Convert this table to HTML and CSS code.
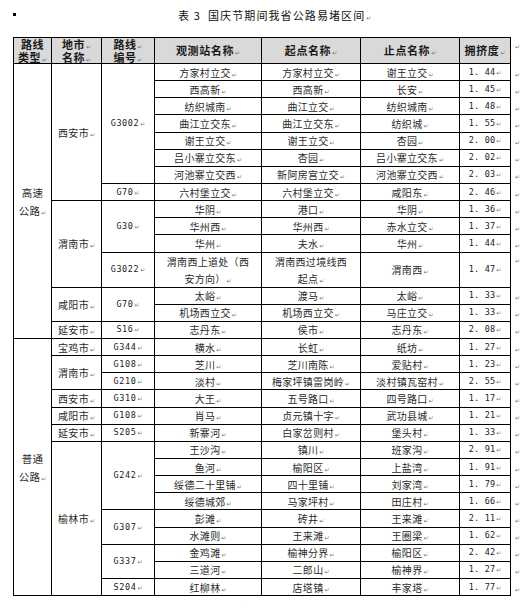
FILE: index.html
```html
<!DOCTYPE html>
<html lang="zh">
<head>
<meta charset="utf-8">
<title>表 3 国庆节期间我省公路易堵区间</title>
<link rel="stylesheet" href="styles.css">
</head>
<body>
<div class="top">
  <span class="bullet"></span>
  <h1 class="title">表 3&nbsp; 国庆节期间我省公路易堵区间<span class="pm"></span></h1>
</div>
<table class="tbl">
  <colgroup>
    <col class="c1"><col class="c2"><col class="c3"><col class="c4"><col class="c5"><col class="c6"><col class="c7"><col class="c8">
  </colgroup>
  <thead>
    <tr class="hd">
      <th><span class="ln">路线</span><span class="ln">类型<span class="pm"></span></span></th>
      <th><span class="ln">地市<span class="pm"></span></span><span class="ln">名称<span class="pm"></span></span></th>
      <th><span class="ln">路线<span class="pm"></span></span><span class="ln">编号<span class="pm"></span></span></th>
      <th>观测站名称<span class="pm"></span></th>
      <th>起点名称<span class="pm"></span></th>
      <th>止点名称<span class="pm"></span></th>
      <th>拥挤度<span class="pm"></span></th>
      <td class="rm top-mark"><span class="pm"></span></td>
    </tr>
  </thead>
  <tbody>
    <tr class="r">
      <td rowspan="15" class="type">高速<br>公路<span class="pm"></span></td>
      <td rowspan="8">西安市<span class="pm"></span></td>
      <td rowspan="7" class="code">G3002<span class="pm"></span></td>
      <td>方家村立交<span class="pm"></span></td><td>方家村立交<span class="pm"></span></td><td>谢王立交<span class="pm"></span></td><td class="num">1. 44<span class="pm"></span></td><td class="rm"><span class="pm"></span></td>
    </tr>
    <tr class="r"><td>西高新<span class="pm"></span></td><td>西高新<span class="pm"></span></td><td>长安<span class="pm"></span></td><td class="num">1. 45<span class="pm"></span></td><td class="rm"><span class="pm"></span></td></tr>
    <tr class="r"><td>纺织城南<span class="pm"></span></td><td>曲江立交<span class="pm"></span></td><td>纺织城南<span class="pm"></span></td><td class="num">1. 48<span class="pm"></span></td><td class="rm"><span class="pm"></span></td></tr>
    <tr class="r"><td>曲江立交东<span class="pm"></span></td><td>曲江立交东<span class="pm"></span></td><td>纺织城<span class="pm"></span></td><td class="num">1. 55<span class="pm"></span></td><td class="rm"><span class="pm"></span></td></tr>
    <tr class="r"><td>谢王立交<span class="pm"></span></td><td>谢王立交<span class="pm"></span></td><td>杏园<span class="pm"></span></td><td class="num">2. 00<span class="pm"></span></td><td class="rm"><span class="pm"></span></td></tr>
    <tr class="r"><td>吕小寨立交东<span class="pm"></span></td><td>杏园<span class="pm"></span></td><td>吕小寨立交东<span class="pm"></span></td><td class="num">2. 02<span class="pm"></span></td><td class="rm"><span class="pm"></span></td></tr>
    <tr class="r"><td>河池寨立交西<span class="pm"></span></td><td>新阿房宫立交<span class="pm"></span></td><td>河池寨立交西<span class="pm"></span></td><td class="num">2. 03<span class="pm"></span></td><td class="rm"><span class="pm"></span></td></tr>
    <tr class="r"><td class="code">G70<span class="pm"></span></td><td>六村堡立交<span class="pm"></span></td><td>六村堡立交<span class="pm"></span></td><td>咸阳东<span class="pm"></span></td><td class="num">2. 46<span class="pm"></span></td><td class="rm"><span class="pm"></span></td></tr>

    <tr class="r">
      <td rowspan="4">渭南市<span class="pm"></span></td>
      <td rowspan="3" class="code">G30<span class="pm"></span></td>
      <td>华阴<span class="pm"></span></td><td>港口<span class="pm"></span></td><td>华阴<span class="pm"></span></td><td class="num">1. 36<span class="pm"></span></td><td class="rm"><span class="pm"></span></td>
    </tr>
    <tr class="r"><td>华州西<span class="pm"></span></td><td>华州西<span class="pm"></span></td><td>赤水立交<span class="pm"></span></td><td class="num">1. 37<span class="pm"></span></td><td class="rm"><span class="pm"></span></td></tr>
    <tr class="r"><td>华州<span class="pm"></span></td><td>夫水<span class="pm"></span></td><td>华州<span class="pm"></span></td><td class="num">1. 44<span class="pm"></span></td><td class="rm"><span class="pm"></span></td></tr>
    <tr class="r2"><td class="code">G3022<span class="pm"></span></td><td class="wrap">渭南西上道处（西<br>安方向）<span class="pm"></span></td><td class="wrap">渭南西过境线西<br>起点<span class="pm"></span></td><td>渭南西<span class="pm"></span></td><td class="num">1. 47<span class="pm"></span></td><td class="rm top-mark"><span class="pm"></span></td></tr>

    <tr class="r">
      <td rowspan="2">咸阳市<span class="pm"></span></td>
      <td rowspan="2" class="code">G70<span class="pm"></span></td>
      <td>太峪<span class="pm"></span></td><td>渡马<span class="pm"></span></td><td>太峪<span class="pm"></span></td><td class="num">1. 33<span class="pm"></span></td><td class="rm"><span class="pm"></span></td>
    </tr>
    <tr class="r"><td>机场西立交<span class="pm"></span></td><td>机场西立交<span class="pm"></span></td><td>马庄立交<span class="pm"></span></td><td class="num">1. 33<span class="pm"></span></td><td class="rm"><span class="pm"></span></td></tr>
    <tr class="r"><td>延安市<span class="pm"></span></td><td class="code">S16<span class="pm"></span></td><td>志丹东<span class="pm"></span></td><td>侯市<span class="pm"></span></td><td>志丹东<span class="pm"></span></td><td class="num">2. 08<span class="pm"></span></td><td class="rm"><span class="pm"></span></td></tr>

    <tr class="r">
      <td rowspan="15" class="type">普通<br>公路<span class="pm"></span></td>
      <td>宝鸡市<span class="pm"></span></td><td class="code">G344<span class="pm"></span></td><td>横水<span class="pm"></span></td><td>长虹<span class="pm"></span></td><td>纸坊<span class="pm"></span></td><td class="num">1. 27<span class="pm"></span></td><td class="rm"><span class="pm"></span></td>
    </tr>
    <tr class="r"><td rowspan="2">渭南市<span class="pm"></span></td><td class="code">G108<span class="pm"></span></td><td>芝川<span class="pm"></span></td><td>芝川南陈<span class="pm"></span></td><td>爱贴村<span class="pm"></span></td><td class="num">1. 23<span class="pm"></span></td><td class="rm"><span class="pm"></span></td></tr>
    <tr class="r"><td class="code">G210<span class="pm"></span></td><td>淡村<span class="pm"></span></td><td>梅家坪镇雷岗岭<span class="pm"></span></td><td>淡村镇瓦窑村<span class="pm"></span></td><td class="num">2. 55<span class="pm"></span></td><td class="rm"><span class="pm"></span></td></tr>
    <tr class="r"><td>西安市<span class="pm"></span></td><td class="code">G310<span class="pm"></span></td><td>大王<span class="pm"></span></td><td>五号路口<span class="pm"></span></td><td>四号路口<span class="pm"></span></td><td class="num">1. 17<span class="pm"></span></td><td class="rm"><span class="pm"></span></td></tr>
    <tr class="r"><td>咸阳市<span class="pm"></span></td><td class="code">G108<span class="pm"></span></td><td>肖马<span class="pm"></span></td><td>贞元镇十字<span class="pm"></span></td><td>武功县城<span class="pm"></span></td><td class="num">1. 21<span class="pm"></span></td><td class="rm"><span class="pm"></span></td></tr>
    <tr class="r"><td>延安市<span class="pm"></span></td><td class="code">S205<span class="pm"></span></td><td>新寨河<span class="pm"></span></td><td>白家岔则村<span class="pm"></span></td><td>堡头村<span class="pm"></span></td><td class="num">1. 33<span class="pm"></span></td><td class="rm"><span class="pm"></span></td></tr>

    <tr class="r">
      <td rowspan="9">榆林市<span class="pm"></span></td>
      <td rowspan="4" class="code">G242<span class="pm"></span></td>
      <td>王沙沟<span class="pm"></span></td><td>镇川<span class="pm"></span></td><td>班家沟<span class="pm"></span></td><td class="num">2. 91<span class="pm"></span></td><td class="rm"><span class="pm"></span></td>
    </tr>
    <tr class="r"><td>鱼河<span class="pm"></span></td><td>榆阳区<span class="pm"></span></td><td>上盐湾<span class="pm"></span></td><td class="num">1. 91<span class="pm"></span></td><td class="rm"><span class="pm"></span></td></tr>
    <tr class="r"><td>绥德二十里铺<span class="pm"></span></td><td>四十里铺<span class="pm"></span></td><td>刘家湾<span class="pm"></span></td><td class="num">1. 79<span class="pm"></span></td><td class="rm"><span class="pm"></span></td></tr>
    <tr class="r"><td>绥德城郊<span class="pm"></span></td><td>马家坪村<span class="pm"></span></td><td>田庄村<span class="pm"></span></td><td class="num">1. 66<span class="pm"></span></td><td class="rm"><span class="pm"></span></td></tr>
    <tr class="r"><td rowspan="2" class="code">G307<span class="pm"></span></td><td>彭滩<span class="pm"></span></td><td>砖井<span class="pm"></span></td><td>王来滩<span class="pm"></span></td><td class="num">2. 11<span class="pm"></span></td><td class="rm"><span class="pm"></span></td></tr>
    <tr class="r"><td>水滩则<span class="pm"></span></td><td>王来滩<span class="pm"></span></td><td>王圈梁<span class="pm"></span></td><td class="num">1. 62<span class="pm"></span></td><td class="rm"><span class="pm"></span></td></tr>
    <tr class="r"><td rowspan="2" class="code">G337<span class="pm"></span></td><td>金鸡滩<span class="pm"></span></td><td>榆神分界<span class="pm"></span></td><td>榆阳区<span class="pm"></span></td><td class="num">2. 42<span class="pm"></span></td><td class="rm"><span class="pm"></span></td></tr>
    <tr class="r"><td>三道河<span class="pm"></span></td><td>二郎山<span class="pm"></span></td><td>榆神界<span class="pm"></span></td><td class="num">1. 27<span class="pm"></span></td><td class="rm"><span class="pm"></span></td></tr>
    <tr class="r"><td class="code">S204<span class="pm"></span></td><td>红柳林<span class="pm"></span></td><td>店塔镇<span class="pm"></span></td><td>丰家塔<span class="pm"></span></td><td class="num">1. 77<span class="pm"></span></td><td class="rm"><span class="pm"></span></td></tr>
  </tbody>
</table>
<h2 class="next">二、高速公路易堵时段</h2>
</body>
</html>
```
FILE: styles.css
```css
html, body {
  margin: 0;
  padding: 0;
  background: #ffffff;
}
body {
  font-family: "Noto Sans CJK SC", "Noto Sans", sans-serif;
  color: #2a2a2a;
  width: 527px;
  overflow: hidden;
}
.top {
  display: flex;
  align-items: center;
  height: 30px;
  padding-left: 13px;
}
.bullet {
  display: block;
  width: 3px;
  height: 3px;
  background: #000;
  margin-top: -2px;
}
.title {
  margin: 0 0 0 162px;
  font-size: 11px;
  font-weight: 400;
  letter-spacing: 1.1px;
  color: #111;
}
.pm {
  line-height: 0;
}
.pm::after {
  content: "\21B5";
  font-size: 6px;
  line-height: 0;
  color: #777;
  margin-left: 1px;
  letter-spacing: 0;
  font-weight: 400;
  font-family: "DejaVu Sans", sans-serif;
}
.tbl {
  margin: 7px 0 0 13px;
  border-collapse: collapse;
  table-layout: fixed;
  width: 511px;
}
.c1 { width: 38px; }
.c2 { width: 50px; }
.c3 { width: 53px; }
.c4 { width: 107px; }
.c5 { width: 99px; }
.c6 { width: 99px; }
.c7 { width: 51px; }
.c8 { width: 14px; }
.tbl th,
.tbl td {
  border: 1px solid #000;
  padding: 0;
  text-align: center;
  vertical-align: middle;
  font-size: 10px;
  line-height: 13px;
  letter-spacing: 0.3px;
  white-space: nowrap;
  overflow: hidden;
}
.tbl th {
  background: #d9d9d9;
  font-size: 11px;
  font-weight: 700;
  letter-spacing: 0.6px;
  line-height: 12.5px;
  color: #1a1a1a;
}
.tbl th .ln {
  display: block;
  height: 12.5px;
}
.hd { height: 26px; }
.r { height: 17.15px; }
.r2 { height: 34.3px; }
.tbl td.type {
  vertical-align: middle;
  padding-top: 2px;
  line-height: 18px;
  font-size: 10.5px;
}
.tbl td.wrap { line-height: 17px; }
.tbl td.code,
.tbl td.num {
  font-family: "DejaVu Sans Mono", monospace;
  font-size: 8.5px;
  letter-spacing: 0.6px;
  color: #222;
}
.tbl td.num { letter-spacing: 0.2px; }
.tbl td.rm {
  border: none;
  text-align: left;
  padding-left: 3px;
  background: transparent;
}
.tbl td.top-mark { vertical-align: top; }
.next {
  margin: 8px 0 0 88px;
  font-size: 14px;
  font-weight: 700;
  letter-spacing: 3px;
}
```
